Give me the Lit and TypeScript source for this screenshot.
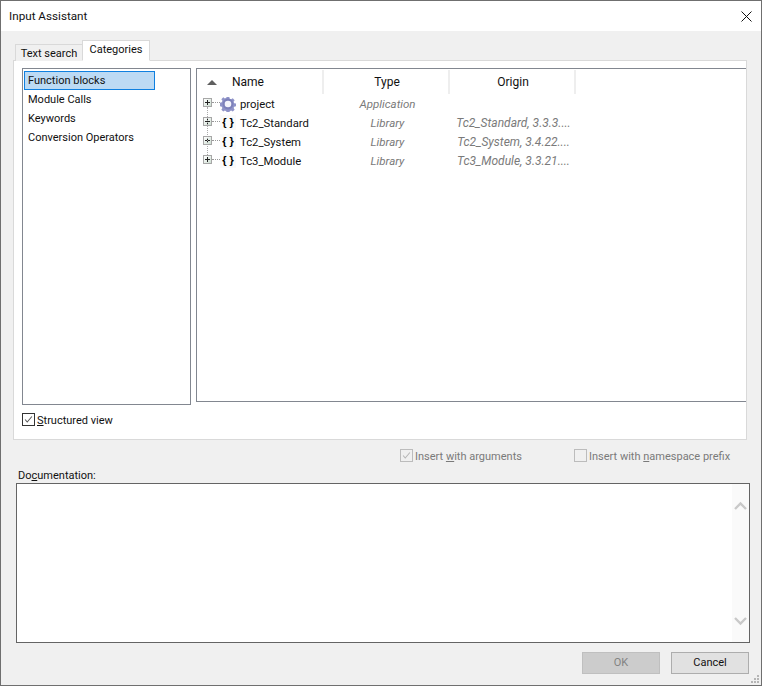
import { LitElement, html, css, svg } from "lit";
import { customElement } from "lit/decorators.js";

const gear = svg`<svg class="gear" width="16" height="16" viewBox="0 0 16 16"><path fill="#8f93c8" d="M6.6 0.5h2.8l.4 2 1.5.6 1.7-1.1 2 2-1.1 1.7.6 1.5 2 .4v2.8l-2 .4-.6 1.5 1.1 1.7-2 2-1.7-1.1-1.5.6-.4 2H6.6l-.4-2-1.5-.6-1.7 1.1-2-2 1.1-1.7-.6-1.5-2-.4V6.6l2-.4.6-1.5L1 3l2-2 1.7 1.1 1.5-.6z" transform="translate(0.4 0.4) scale(.95)"/><circle cx="8" cy="8" r="5.4" fill="#7d81ba"/><circle cx="8" cy="8" r="3.3" fill="#f4f4fb"/></svg>`;

@customElement("app-root")
export class AppRoot extends LitElement {
  static styles = css`
    :host { display: block; width: 762px; height: 686px; font-family: Roboto, "Noto Sans", sans-serif; font-size: 11px; color: #111; }
    .win { box-sizing: border-box; width: 762px; height: 686px; border: 1px solid #6f6f6f; background: #f0f0f0; display: flex; flex-direction: column; position: relative; overflow: hidden; }
    .title { height: 30px; flex: none; background: #fff; display: flex; align-items: center; justify-content: space-between; padding: 0 9px 0 8px; font-size: 11.7px; }
    .close { display: block; }
    .content { flex: 1; display: flex; flex-direction: column; padding: 10px 14px 0 12px; min-height: 0; }
    .tabs { display: flex; align-items: flex-end; height: 20px; padding-left: 2px; margin-bottom: -1px; position: relative; z-index: 1; }
    .tab { box-sizing: border-box; height: 17px; width: 68px; border: 1px solid #d9d9d9; border-bottom: none; background: #f0f0f0; text-align: center; line-height: 17px; }
    .tab.active { height: 21px; width: 68px; margin-left: -1px; background: #fff; line-height: 18px; border-bottom: 1px solid #fff; }
    .panel { box-sizing: border-box; height: 380px; background: #fff; border: 1px solid #d9d9d9; padding: 7px 0 0 8px; }
    .panes { display: flex; align-items: flex-start; gap: 5px; }
    .list { box-sizing: border-box; width: 169px; height: 337px; border: 1px solid #828790; padding: 2px 1px 1px; background: #fff; }
    .item { height: 19px; line-height: 19px; padding-left: 4px; box-sizing: border-box; }
    .item.sel { background: #bcdaf4; outline: 1px solid #0f80e0; outline-offset: -1px; width: 131px; }
    .tree { box-sizing: border-box; flex: 1; height: 334px; border: 1px solid #828790; border-right: none; background: #fff; }
    .head { display: flex; height: 24px; padding-top: 1px; font-size: 12px; }
    .hcell { box-sizing: border-box; width: 126px; border-right: 2px solid #eeeeee; text-align: center; line-height: 24px; padding-left: 2px; }
    .hcell.name { width: 127px; display: flex; align-items: center; padding-left: 10px; text-align: left; }
    .tri { width: 0; height: 0; border-left: 5px solid transparent; border-right: 5px solid transparent; border-bottom: 5px solid #5f5f5f; margin-right: 15px; }
    .row { display: flex; height: 19px; align-items: center; }
    .cname { width: 127px; display: flex; align-items: center; padding-left: 6px; box-sizing: border-box; }
    .exp { box-sizing: border-box; width: 9px; height: 9px; margin-top: -2px; border: 1px solid #a7a7a7; background: linear-gradient(135deg, #fff, #cfdfd3); position: relative; flex: none; }
    .exp::before { content: ""; position: absolute; left: 1px; width: 5px; top: 3px; height: 1px; background: #222; }
    .exp::after { content: ""; position: absolute; top: 1px; height: 5px; left: 3px; width: 1px; background: #222; }
    .link { width: 8px; margin-top: -2px; border-top: 1px dotted #999; flex: none; box-sizing: border-box; }
    .drop { position: absolute; left: 206px; top: 106px; height: 48px; border-left: 1px dotted #aaa; }
    .ico { width: 16px; height: 16px; flex: none; margin-right: 4px; display: flex; align-items: center; justify-content: center; }
    .gear { display: block; }
    .brace { font-family: "Liberation Sans", sans-serif; font-weight: 700; font-size: 11px; color: #000; background: #fafafa; line-height: 15px; width: 16px; text-align: center; white-space: pre; }
    .t { white-space: nowrap; font-size: 11.3px; padding-top: 2px; }
    .ctype, .corigin { box-sizing: border-box; width: 126px; text-align: center; font-style: italic; color: #7a7a7a; white-space: nowrap; padding-left: 1px; font-size: 11.5px; }
    .corigin { font-size: 12px; }
    .opt { display: flex; align-items: center; }
    .opt span { padding-top: 2px; }
    .cb { box-sizing: border-box; width: 13px; height: 13px; border: 1px solid #333; background: #fff; flex: none; margin-right: 2px; display: block; }
    .cb.dis { border-color: #bcbcbc; background: #f0f0f0; }
    .structured { height: 29px; }
    .checks { display: flex; height: 31px; flex: none; align-items: center; color: #7a7a7a; }
    .arg { margin-left: 387px; width: 174px; }
    u { text-underline-offset: 1px; }
    .doclabel { height: 14px; line-height: 16px; padding-left: 5px; margin-top: -3px; flex: none; }
    .doc { box-sizing: border-box; margin-left: 3px; width: 734px; height: 160px; border: 1px solid #646464; background: #fff; display: flex; justify-content: flex-end; margin-top: 1px; flex: none; }
    .sb { width: 17px; background: #fafafa; display: flex; flex-direction: column; justify-content: space-between; align-items: center; padding: 17px 0 16px; box-sizing: border-box; }
    .footer { display: flex; justify-content: flex-end; gap: 11px; padding: 9px 0 0; margin-right: -2px; }
    .btn { box-sizing: border-box; width: 78px; height: 22px; border: 1px solid #adadad; background: #e1e1e1; text-align: center; line-height: 20px; }
    .btn.dis { background: #cccccc; border-color: #bfbfbf; color: #838383; }
    .grip { position: absolute; right: 1px; bottom: 1px; }
  `;

  render() {
    const rows = [
      { n: "project", t: "Application", o: "", g: true },
      { n: "Tc2_Standard", t: "Library", o: "Tc2_Standard, 3.3.3...." },
      { n: "Tc2_System", t: "Library", o: "Tc2_System, 3.4.22...." },
      { n: "Tc3_Module", t: "Library", o: "Tc3_Module, 3.3.21...." },
    ];
    return html`<div class="win">
      <div class="title"><span>Input Assistant</span>
        <svg class="close" width="11" height="11" viewBox="0 0 11 11"><path d="M.5.5l10 10M10.5.5l-10 10" stroke="#111" fill="none"/></svg></div>
      <div class="content">
        <div class="tabs"><div class="tab">Text search</div><div class="tab active">Categories</div></div>
        <div class="panel">
          <div class="panes">
            <div class="list">
              <div class="item sel">Function blocks</div>
              <div class="item">Module Calls</div>
              <div class="item">Keywords</div>
              <div class="item">Conversion Operators</div>
            </div>
            <div class="tree">
              <div class="head">
                <div class="hcell name"><i class="tri"></i>Name</div>
                <div class="hcell">Type</div>
                <div class="hcell">Origin</div>
              </div>
              <div class="rows">
                ${rows.map((r) => html`<div class="row">
                  <div class="cname"><i class="exp"></i><i class="link"></i>
                    <span class="ico">${r.g ? gear : html`<span class="brace">{ }</span>`}</span><span class="t">${r.n}</span></div>
                  <div class="ctype">${r.t}</div>
                  <div class="corigin">${r.o}</div>
                </div>`)}
              </div>
            </div>
          </div>
          <div class="opt structured">
            <svg class="cb" viewBox="0 0 13 13"><path d="M2.5 6.5l2.5 3 5.5-6.5" stroke="#555" stroke-width="1.2" fill="none"/></svg>
            <span><u>S</u>tructured view</span>
          </div>
        </div>
        <div class="checks">
          <div class="opt arg"><svg class="cb dis" viewBox="0 0 13 13"><path d="M2.5 6.5l2.5 3 5.5-6.5" stroke="#b5b5b5" stroke-width="1.2" fill="none"/></svg><span>Insert <u>w</u>ith arguments</span></div>
          <div class="opt"><i class="cb dis"></i><span>Insert with <u>n</u>amespace prefix</span></div>
        </div>
        <div class="doclabel">Do<u>c</u>umentation:</div>
        <div class="doc"><div class="sb">
          <svg width="13" height="9" viewBox="0 0 13 9"><path d="M1 8l5.5-5.5L12 8" stroke="#c9c9c9" stroke-width="2.4" fill="none"/></svg>
          <svg width="13" height="9" viewBox="0 0 13 9"><path d="M1 1l5.5 5.5L12 1" stroke="#c9c9c9" stroke-width="2.4" fill="none"/></svg>
        </div></div>
        <div class="footer"><div class="btn dis">OK</div><div class="btn">Cancel</div></div>
      </div>
      <i class="drop"></i>
      <svg class="grip" width="9" height="9" viewBox="0 0 9 9" fill="#b5b5b5"><rect x="6" y="0" width="2" height="2"/><rect x="3" y="3" width="2" height="2"/><rect x="6" y="3" width="2" height="2"/><rect x="0" y="6" width="2" height="2"/><rect x="3" y="6" width="2" height="2"/><rect x="6" y="6" width="2" height="2"/></svg>
    </div>`;
  }
}
